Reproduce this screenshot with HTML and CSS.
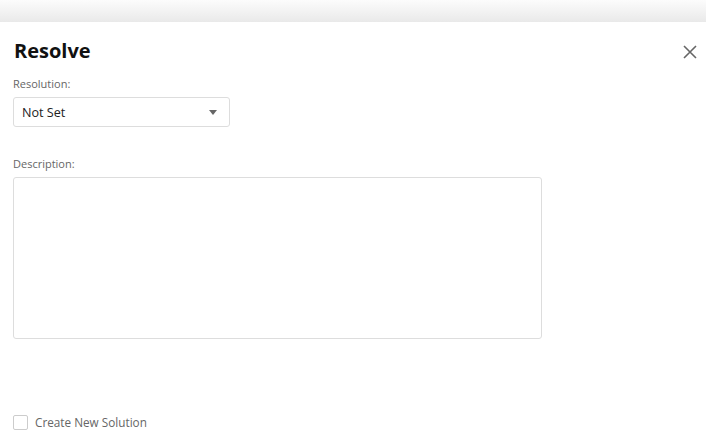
FILE: index.html
```html
<!DOCTYPE html>
<html>
<head>
<meta charset="utf-8">
<link rel="stylesheet" href="styles.css">
</head>
<body>
<div class="topbar"></div>
<div class="dialog">
  <div class="header">
    <h1 class="title">Resolve</h1>
    <button class="close" aria-label="Close">
      <svg width="14" height="14" viewBox="0 0 14 14"><path d="M1 1L13 13M13 1L1 13" stroke="#666" stroke-width="1.6" fill="none"/></svg>
    </button>
  </div>
  <div class="field">
    <label class="label">Resolution:</label>
    <div class="select">
      <span>Not Set</span>
      <svg class="caret" width="8" height="5" viewBox="0 0 8 5"><path d="M0 0H8L4 5Z" fill="#666"/></svg>
    </div>
  </div>
  <div class="field desc">
    <label class="label">Description:</label>
    <div class="textarea"></div>
  </div>
  <div class="check">
    <span class="box"></span>
    <span class="check-label">Create New Solution</span>
  </div>
</div>
</body>
</html>
```
FILE: styles.css
```css
* { box-sizing: border-box; }
html, body { margin: 0; padding: 0; background: #fff; }
body { font-family: "Open Sans", "Noto Sans", sans-serif; color: #333; width: 706px; height: 438px; overflow: hidden; }
.topbar { height: 22px; background: linear-gradient(#fcfcfc, #e9e9e9); }
.dialog { padding: 0 0 0 13px; }
.header { display: flex; justify-content: space-between; align-items: center; height: 54px; }
.title { margin: 4px 0 0 1px; font-size: 20px; font-weight: 700; color: #111; line-height: 26px; }
.close { border: 0; background: none; padding: 0; margin: 6px 9px 0 0; width: 14px; height: 14px; display: flex; }
.field { display: flex; flex-direction: column; }
.label { font-size: 11px; color: #666; line-height: 15px; margin-bottom: 6px; }
.select { width: 217px; height: 30px; border: 1px solid #ddd; border-radius: 3px; display: flex; align-items: center; justify-content: space-between; padding: 0 12px 0 8px; font-size: 12.6px; color: #222; }
.desc { margin-top: 29px; }
.textarea { width: 529px; height: 162px; border: 1px solid #ddd; border-radius: 3px; }
.check { display: flex; align-items: center; margin-top: 75px; gap: 7px; }
.box { width: 15px; height: 15px; border: 1px solid #ccc; border-radius: 2px; }
.check-label { font-size: 11.75px; color: #666; }
```
